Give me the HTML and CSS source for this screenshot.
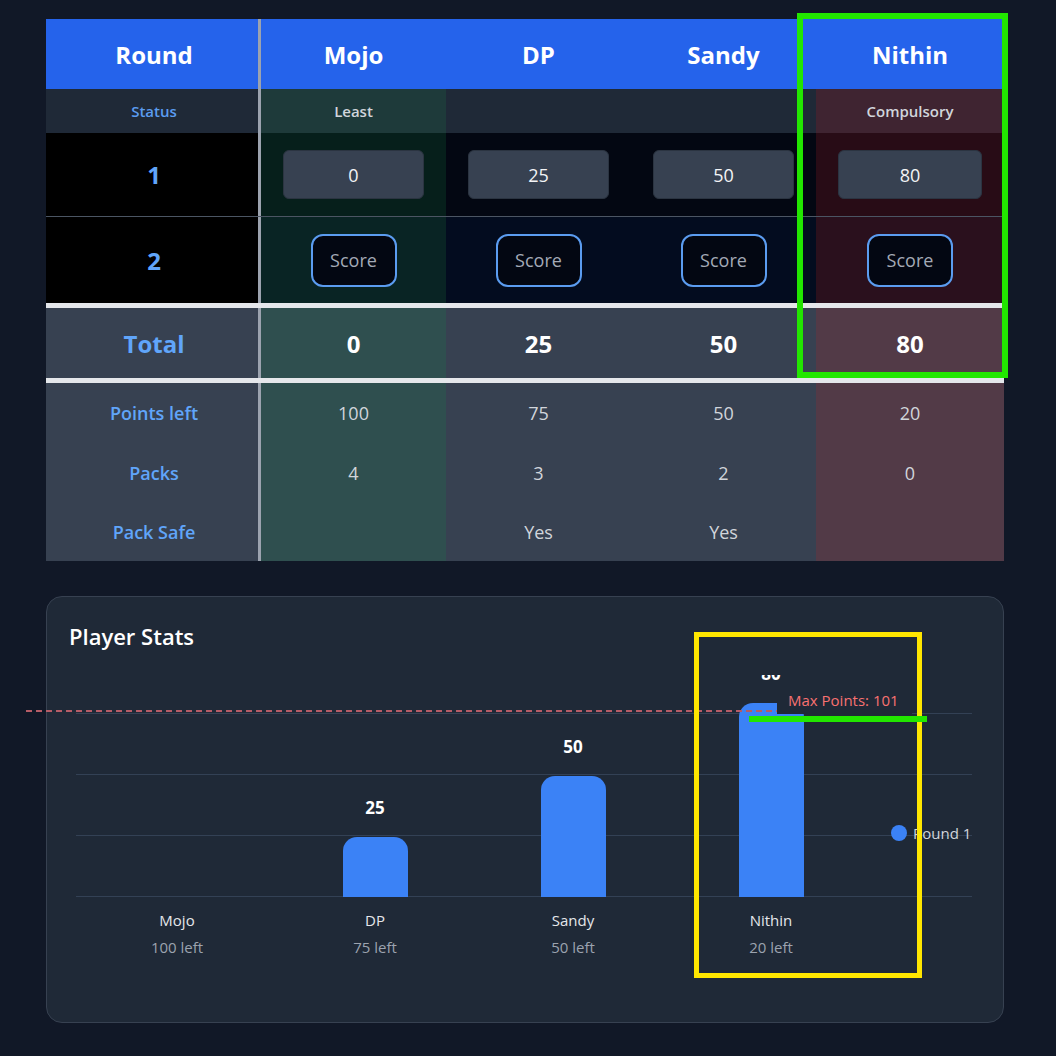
FILE: index.html
```html
<!DOCTYPE html>
<html lang="en">
<head>
<meta charset="utf-8">
<title>Scoreboard</title>
<link rel="stylesheet" href="styles.css">
</head>
<body>
<main class="page">
  <section class="score-table">
    <div class="row row-head">
      <div class="cell c-round">Round</div>
      <div class="cell">Mojo</div>
      <div class="cell">DP</div>
      <div class="cell">Sandy</div>
      <div class="cell">Nithin</div>
    </div>
    <div class="row row-status">
      <div class="cell c-round">Status</div>
      <div class="cell p-least">Least</div>
      <div class="cell"></div>
      <div class="cell"></div>
      <div class="cell p-comp">Compulsory</div>
    </div>
    <div class="row row-r1">
      <div class="cell c-round">1</div>
      <div class="cell p-least"><div class="score-input">0</div></div>
      <div class="cell"><div class="score-input">25</div></div>
      <div class="cell"><div class="score-input">50</div></div>
      <div class="cell p-comp"><div class="score-input">80</div></div>
    </div>
    <div class="row row-r2">
      <div class="cell c-round">2</div>
      <div class="cell p-least"><button class="score-btn">Score</button></div>
      <div class="cell"><button class="score-btn">Score</button></div>
      <div class="cell"><button class="score-btn">Score</button></div>
      <div class="cell p-comp"><button class="score-btn">Score</button></div>
    </div>
    <div class="row row-total">
      <div class="cell c-round">Total</div>
      <div class="cell p-least">0</div>
      <div class="cell">25</div>
      <div class="cell">50</div>
      <div class="cell p-comp">80</div>
    </div>
    <div class="row row-info row-first">
      <div class="cell c-round">Points left</div>
      <div class="cell p-least">100</div>
      <div class="cell">75</div>
      <div class="cell">50</div>
      <div class="cell p-comp">20</div>
    </div>
    <div class="row row-info row-mid">
      <div class="cell c-round">Packs</div>
      <div class="cell p-least">4</div>
      <div class="cell">3</div>
      <div class="cell">2</div>
      <div class="cell p-comp">0</div>
    </div>
    <div class="row row-info row-last">
      <div class="cell c-round">Pack Safe</div>
      <div class="cell p-least"></div>
      <div class="cell">Yes</div>
      <div class="cell">Yes</div>
      <div class="cell p-comp"></div>
    </div>
  </section>

  <section class="stats-card">
    <h2 class="stats-title">Player Stats</h2>
    <div class="chart">
      <div class="plot">
        <div class="grid-line" style="top:38px"></div>
        <div class="grid-line" style="top:99px"></div>
        <div class="grid-line" style="top:160px"></div>
        <div class="grid-line" style="top:221px"></div>
        <div class="bars">
          <div class="bar-col"></div>
          <div class="bar-col">
            <span class="bar-value">25</span>
            <div class="bar" style="height:60px"></div>
          </div>
          <div class="bar-col">
            <span class="bar-value">50</span>
            <div class="bar" style="height:121px"></div>
          </div>
          <div class="bar-col">
            <span class="bar-value">80</span>
            <div class="bar" style="height:194px"></div>
          </div>
        </div>
        <div class="legend"><span class="legend-dot"></span><span>Round 1</span></div>
      </div>
      <div class="x-labels">
        <div class="x-label"><span class="x-name">Mojo</span><span class="x-sub">100 left</span></div>
        <div class="x-label"><span class="x-name">DP</span><span class="x-sub">75 left</span></div>
        <div class="x-label"><span class="x-name">Sandy</span><span class="x-sub">50 left</span></div>
        <div class="x-label"><span class="x-name">Nithin</span><span class="x-sub">20 left</span></div>
      </div>
    </div>
    <div class="max-line"></div>
    <div class="max-label">Max Points: 101</div>
  </section>
</main>

<div class="mark mark-green-box"></div>
<div class="mark mark-yellow-box"></div>
<div class="mark mark-green-line"></div>
</body>
</html>
```

FILE: styles.css
```css
html {
  background: #111827;
}
body {
  margin: 0;
  min-height: 1056px;
  position: relative;
  background: #111827;
  font-family: "Open Sans", "Noto Sans", "Liberation Sans", sans-serif;
  color: #f9fafb;
}
.page {
  padding: 19px 0 0 46px;
  width: 958px;
}

/* ---------- table ---------- */
.score-table {
  width: 958px;
}
.row {
  display: grid;
  grid-template-columns: 215px 185px 185px 185px 1fr;
}
.cell {
  display: flex;
  align-items: center;
  justify-content: center;
  text-align: center;
}
.c-round {
  border-right: 3px solid #9ca3af;
  color: #60a5fa;
  padding-left: 4px;
}

.row-head {
  height: 70px;
  background: #2563eb;
  font-size: 24px;
  font-weight: 700;
}
.row-head .cell,
.row-head .c-round {
  color: #ffffff;
}

.row-status {
  height: 44px;
  background: #1f2937;
  font-size: 15px;
  font-weight: 600;
  color: #d1d5db;
}
.row-status .c-round {
  color: #5b9cf0;
}
.row-status .p-least { background: #1e3a3a; }
.row-status .p-comp { background: #3f2431; }

.row-r1 {
  height: 83px;
  background: #030712;
  border-bottom: 1px solid #4b5563;
}
.row-r1 .c-round,
.row-r2 .c-round {
  background: #000000;
  font-size: 24px;
  font-weight: 700;
}
.row-r1 .p-least { background: #061f1b; }
.row-r1 .p-comp { background: #280c16; }

.row-r2 {
  height: 86px;
  background: #030c1f;
}
.row-r2 .p-least { background: #092424; }
.row-r2 .p-comp { background: #2a101d; }

.score-input {
  box-sizing: border-box;
  width: calc(100% - 44px);
  height: 49px;
  background: #374151;
  border: 1px solid #2b3441;
  border-radius: 6px;
  display: flex;
  align-items: center;
  justify-content: center;
  font-size: 18px;
  color: #f3f4f6;
}
.score-btn {
  box-sizing: border-box;
  width: 86px;
  height: 53px;
  background: #030712;
  border: 2px solid #5b9cf0;
  border-radius: 12px;
  font-family: inherit;
  font-size: 18px;
  color: #a3aab6;
  padding: 0;
}

.row-total {
  height: 70px;
  background: #374151;
  border-top: 5px solid #e5e7eb;
  border-bottom: 5px solid #e5e7eb;
  font-size: 24px;
  font-weight: 700;
  color: #ffffff;
}
.row-total .p-least,
.row-info .p-least { background: #2f4f4f; }
.row-total .p-comp,
.row-info .p-comp { background: #523a47; }

.row-info {
  background: #374151;
  font-size: 18px;
  color: #d1d5db;
}
.row-info .c-round {
  font-weight: 600;
}
.row-first { height: 60px; }
.row-mid { height: 60px; }
.row-last { height: 58px; }

/* ---------- stats card ---------- */
.stats-card {
  position: relative;
  box-sizing: border-box;
  margin-top: 35px;
  width: 958px;
  height: 427px;
  background: #1f2937;
  border: 1px solid #374151;
  border-radius: 16px;
  padding-top: 24px;
}
.stats-title {
  margin: 0;
  padding-left: 22px;
  font-size: 22px;
  line-height: 30px;
  font-weight: 600;
  color: #ffffff;
}
.chart {
  margin: 24px 31px 0 29px;
}
.plot {
  position: relative;
  height: 222px;
  overflow: hidden;
}
.grid-line {
  position: absolute;
  left: 0;
  right: 0;
  height: 1px;
  background: #334155;
}
.bars {
  position: relative;
  display: flex;
  align-items: flex-end;
  height: 100%;
  padding-left: 2px;
}
.bar-col {
  width: 198px;
  display: flex;
  flex-direction: column;
  align-items: center;
  justify-content: flex-end;
  height: 100%;
}
.bar-value {
  flex-shrink: 0;
  font-size: 17px;
  line-height: 20px;
  font-weight: 700;
  color: #ffffff;
  margin-bottom: 19px;
}
.bar {
  flex-shrink: 0;
  width: 65px;
  background: #3b82f6;
  border-radius: 14px 14px 0 0;
}
.legend {
  position: absolute;
  left: 815px;
  top: 148px;
  display: flex;
  align-items: center;
  gap: 6px;
  font-size: 15px;
  color: #d1d5db;
}
.legend-dot {
  width: 16px;
  height: 16px;
  border-radius: 50%;
  background: #3b82f6;
}
.x-labels {
  display: flex;
  padding-left: 2px;
  margin-top: 12px;
}
.x-label {
  width: 198px;
  display: flex;
  flex-direction: column;
  align-items: center;
  gap: 5px;
  font-size: 15px;
  line-height: 22px;
}
.x-name { color: #e5e7eb; }
.x-sub { color: #9ca3af; }

.max-line {
  position: absolute;
  left: -21px;
  top: 113px;
  width: 751px;
  height: 2px;
  background: repeating-linear-gradient(to right, #b65c66 0 6px, transparent 6px 10px);
}
.max-label {
  position: absolute;
  left: 730px;
  top: 90px;
  width: 135px;
  height: 27px;
  box-sizing: border-box;
  padding-left: 11px;
  background: #1f2937;
  color: #f87171;
  font-size: 15px;
  line-height: 27px;
}

/* ---------- annotation overlays ---------- */
.mark {
  position: absolute;
  box-sizing: border-box;
}
.mark-green-box {
  left: 797px;
  top: 13px;
  width: 211px;
  height: 365px;
  border: 6px solid #22e600;
}
.mark-yellow-box {
  left: 694px;
  top: 632px;
  width: 228px;
  height: 346px;
  border: 5px solid #ffe600;
}
.mark-green-line {
  left: 749px;
  top: 716px;
  width: 178px;
  height: 6px;
  background: #22e600;
}
```
